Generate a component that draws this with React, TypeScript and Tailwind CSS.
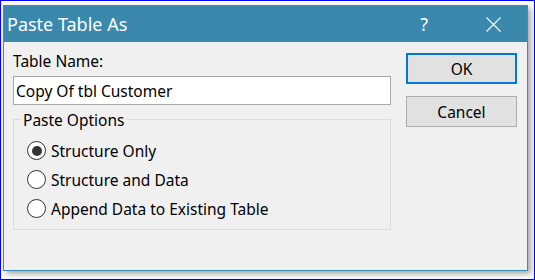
const options = ["Structure Only", "Structure and Data", "Append Data to Existing Table"];

function Radio({ label, checked }: { label: string; checked?: boolean }) {
  return (
    <div className="flex h-[29px] items-center">
      <span className="ml-[13px] flex h-[19px] w-[19px] items-center justify-center rounded-full border border-[#333333] bg-white">
        {checked && <span className="h-[10px] w-[10px] rounded-full bg-[#333333]" />}
      </span>
      <span className="ml-[5px] leading-[20px]">{label}</span>
    </div>
  );
}

export default function App() {
  return (
    <div
      className="h-[280px] w-[535px] overflow-hidden border border-[#0000ff] bg-white pl-[2px] pt-[4px] text-[15.5px] text-black"
      style={{ fontFamily: '"Noto Sans", "Open Sans", sans-serif' }}
    >
      <div className="flex h-[266px] w-[525px] flex-col border border-[#3b8fb4] bg-[#f0f0f0] shadow-[3px_3px_6px_rgba(0,0,0,0.35)]">
        {/* title bar */}
        <div className="flex h-[36px] items-center bg-[#3a88ab] text-white">
          <div className="ml-[3px] flex-1 text-[18px] leading-[22px]">Paste Table As</div>
          <div className="mr-[58px] text-[18px] leading-[20px]">?</div>
          <svg width="15" height="15" viewBox="0 0 15 15" className="mr-[26px]">
            <path d="M0.5 0.5 L14.5 14.5 M14.5 0.5 L0.5 14.5" stroke="white" strokeWidth="1.1" />
          </svg>
        </div>

        <div className="flex">
          <div className="ml-[9px] w-[378px]">
            <div className="mt-[9px] leading-[20px]">Table Name:</div>
            <div className="mt-[5px] flex h-[29px] items-center border border-[#a8a8a8] bg-white pl-[2px] leading-[20px]">
              Copy Of tbl Customer
            </div>
            <fieldset className="mt-[3px] h-[122px] border border-[#dcdcdc]">
              <legend className="ml-[7px] px-[2px] pt-[2px] leading-[20px]">Paste Options</legend>
              <div className="mt-[6px]">
                {options.map((o, i) => (
                  <Radio key={o} label={o} checked={i === 0} />
                ))}
              </div>
            </fieldset>
          </div>

          <div className="ml-[15px] mt-[11px] flex flex-col gap-[12px]">
            <button className="h-[31px] w-[111px] border-2 border-[#0078d7] bg-[#e1e1e1] leading-[20px]">OK</button>
            <button className="h-[31px] w-[111px] border border-[#adadad] bg-[#e1e1e1] leading-[20px]">Cancel</button>
          </div>
        </div>
      </div>
    </div>
  );
}
